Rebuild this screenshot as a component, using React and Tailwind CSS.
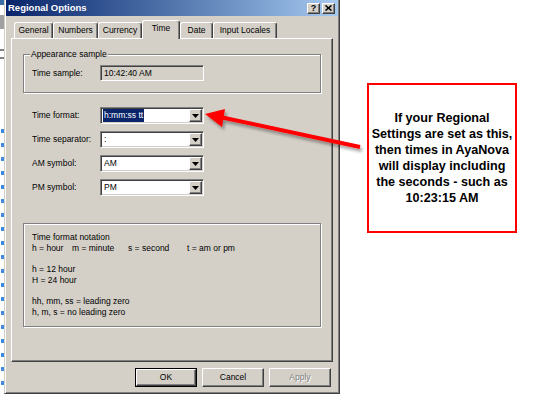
import React from 'react';

const raised = "border border-t-white border-l-white border-r-[#404040] border-b-[#404040] shadow-[inset_-1px_-1px_0_#808080]";
const sunken = "border border-t-[#808080] border-l-[#808080] border-r-white border-b-white shadow-[inset_1px_1px_0_#404040,inset_-1px_-1px_0_#d4d0c8]";
const etched = "border border-[#808080] shadow-[inset_1px_1px_0_#ffffff,1px_1px_0_#ffffff]";

const tabs = [
  { label: 'General', w: 'w-[39px]' },
  { label: 'Numbers', w: 'w-[45px]' },
  { label: 'Currency', w: 'w-[44px]' },
  { label: 'Time', w: 'w-[38px]', active: true },
  { label: 'Date', w: 'w-[33px]' },
  { label: 'Input Locales', w: 'w-[64px]' },
];

const fields = [
  { label: 'Time format:', value: 'h:mm:ss tt', selected: true },
  { label: 'Time separator:', value: ':' },
  { label: 'AM symbol:', value: 'AM' },
  { label: 'PM symbol:', value: 'PM' },
];

function Combo({ value, selected }) {
  return (
    <div className={`flex items-center w-[104px] h-[17px] bg-white pl-[2px] pr-[1px] ${sunken}`}>
      <div className="flex-1 flex items-center">
        <span className={selected ? "bg-[#0a246a] text-white px-[1px] leading-[13px]" : "px-[1px] leading-[13px]"}>
          {value}
        </span>
      </div>
      <div className={`w-[13px] h-[13px] bg-[#d4d0c8] flex items-center justify-center ${raised}`}>
        <svg width="7" height="4" viewBox="0 0 7 4">
          <path d="M0 0h7L3.5 4z" fill="#000" />
        </svg>
      </div>
    </div>
  );
}

function Btn({ children, isDefault, disabled }) {
  const text = disabled ? "text-[#808080] [text-shadow:1px_1px_0_#fff]" : "text-black";
  if (isDefault) {
    return (
      <div className="w-[62px] h-[19px] border border-black">
        <div className={`w-full h-full bg-[#d4d0c8] flex items-center justify-center ${raised} ${text}`}>{children}</div>
      </div>
    );
  }
  return (
    <div className={`w-[62px] h-[19px] bg-[#d4d0c8] flex items-center justify-center ${raised} ${text}`}>{children}</div>
  );
}

function LeftStrip() {
  return (
    <div className="w-[4px] h-[395px] flex flex-col bg-white">
      <div className="h-[5px] bg-[#3a6ea5]" />
      <div className="h-[10px] bg-white" />
      <div className="h-[14px] bg-[#a0a0a0]" />
      <div className="h-[20px] bg-white" />
      <div className="h-[2px] bg-[#808080]" />
      <div className="h-[6px] bg-white" />
      <div className="h-[2px] bg-[#808080]" />
      <div className="flex flex-col gap-[10px] pt-[70px] pl-[1px]">
        {Array.from({ length: 19 }).map((_, i) => (
          <div key={i} className="w-[3px] h-[4px] bg-[#3c8be0]" />
        ))}
      </div>
    </div>
  );
}

function Dialog() {
  return (
    <div className="w-[336px] h-[394px] bg-[#d4d0c8] flex flex-col border-l border-r border-b border-l-[#d4d0c8] border-r-[#404040] border-b-[#404040] shadow-[inset_1px_0_0_#ffffff,inset_-1px_-1px_0_#808080]">
      {/* title bar */}
      <div className="mx-[1px] h-[16px] flex items-center justify-between bg-gradient-to-r from-[#0a246a] to-[#a6caf0] pl-[2px] pr-[3px]">
        <span className="text-white font-bold text-[9.5px] leading-[16px]">Regional Options</span>
        <div className="flex gap-[2px]">
          <div className={`w-[13px] h-[11px] bg-[#d4d0c8] flex items-center justify-center ${raised}`}>
            <span className="font-bold text-[9px] leading-[9px] text-black">?</span>
          </div>
          <div className={`w-[13px] h-[11px] bg-[#d4d0c8] flex items-center justify-center ${raised}`}>
            <svg width="7" height="6" viewBox="0 0 7 6">
              <path d="M0.5 0.5L6.5 5.5M6.5 0.5L0.5 5.5" stroke="#000" strokeWidth="1.6" />
            </svg>
          </div>
        </div>
      </div>

      {/* tabs */}
      <div className="mt-[4px] ml-[9px] h-[18px] flex items-end">
        {tabs.map((t) => (
          <div
            key={t.label}
            className={`${t.w} ${t.active ? 'h-[19px] -mb-px relative z-10 pb-[3px]' : 'h-[16px]'} bg-[#d4d0c8] rounded-t-[3px] border-t border-l border-r border-t-white border-l-white border-r-[#404040] shadow-[inset_-1px_0_0_#808080] flex items-center justify-center whitespace-nowrap`}
          >
            {t.label}
          </div>
        ))}
      </div>

      {/* tab panel */}
      <div className="ml-[6px] w-[322px] h-[324px] border border-t-white border-l-white border-r-[#404040] border-b-[#404040] shadow-[inset_-1px_-1px_0_#808080] flex flex-col">
        <div className={`mt-[15px] ml-[11px] w-[298px] h-[39px] ${etched}`}>
          <div className="ml-[6px] -mt-[6px] h-[11px] leading-[11px] flex">
            <span className="bg-[#d4d0c8] px-[1px]">Appearance sample</span>
          </div>
          <div className="mt-[5px] ml-[8px] flex items-center">
            <span className="w-[68px]">Time sample:</span>
            <div className={`w-[104px] h-[16px] flex items-center pl-[3px] ${sunken}`}>10:42:40 AM</div>
          </div>
        </div>

        <div className="mt-[14px] ml-[20px] flex flex-col gap-[7px]">
          {fields.map((f) => (
            <div key={f.label} className="flex items-center h-[17px]">
              <span className="w-[68px]">{f.label}</span>
              <Combo value={f.value} selected={f.selected} />
            </div>
          ))}
        </div>

        <div className={`mt-[27px] ml-[11px] w-[298px] h-[104px] pt-[8px] pl-[8px] leading-[11px] ${etched}`}>
          <div>Time format notation</div>
          <div className="flex">
            <span className="w-[40px]">h = hour</span>
            <span className="w-[56px]">m = minute</span>
            <span className="w-[59px]">s = second</span>
            <span>t = am or pm</span>
          </div>
          <div className="mt-[10px]">h = 12 hour</div>
          <div>H = 24 hour</div>
          <div className="mt-[10px]">hh, mm, ss = leading zero</div>
          <div>h, m, s = no leading zero</div>
        </div>
      </div>

      {/* buttons */}
      <div className="mt-[6px] ml-[130px] flex gap-[5px]">
        <Btn isDefault>OK</Btn>
        <Btn>Cancel</Btn>
        <Btn disabled>Apply</Btn>
      </div>
    </div>
  );
}

export default function App() {
  return (
    <div className="relative w-[550px] h-[395px] bg-white overflow-hidden flex font-['Liberation_Sans',Arial,sans-serif] text-[8.5px] text-black">
      <LeftStrip />
      <Dialog />
      <div className="ml-[27px] pt-[83px]">
        <div className="w-[150px] h-[150px] border-2 border-[#ff0000] flex items-center justify-center">
          <p className="font-bold text-[12.6px] leading-[16px] text-center whitespace-nowrap">
            If your Regional<br />
            Settings are set as this,<br />
            then times in AyaNova<br />
            will display including<br />
            the seconds - such as<br />
            10:23:15 AM
          </p>
        </div>
      </div>

      {/* annotation arrow */}
      <svg className="absolute inset-0 pointer-events-none" width="550" height="395" viewBox="0 0 550 395">
        <defs>
          <filter id="sh" x="-20%" y="-50%" width="140%" height="200%">
            <feDropShadow dx="2" dy="3" stdDeviation="1.5" floodColor="#000" floodOpacity="0.35" />
          </filter>
        </defs>
        <g filter="url(#sh)">
          <line x1="220" y1="117" x2="360" y2="147" stroke="#ff0000" strokeWidth="4" />
          <polygon points="205,114 225,109 222,127" fill="#ff0000" />
        </g>
      </svg>
    </div>
  );
}
